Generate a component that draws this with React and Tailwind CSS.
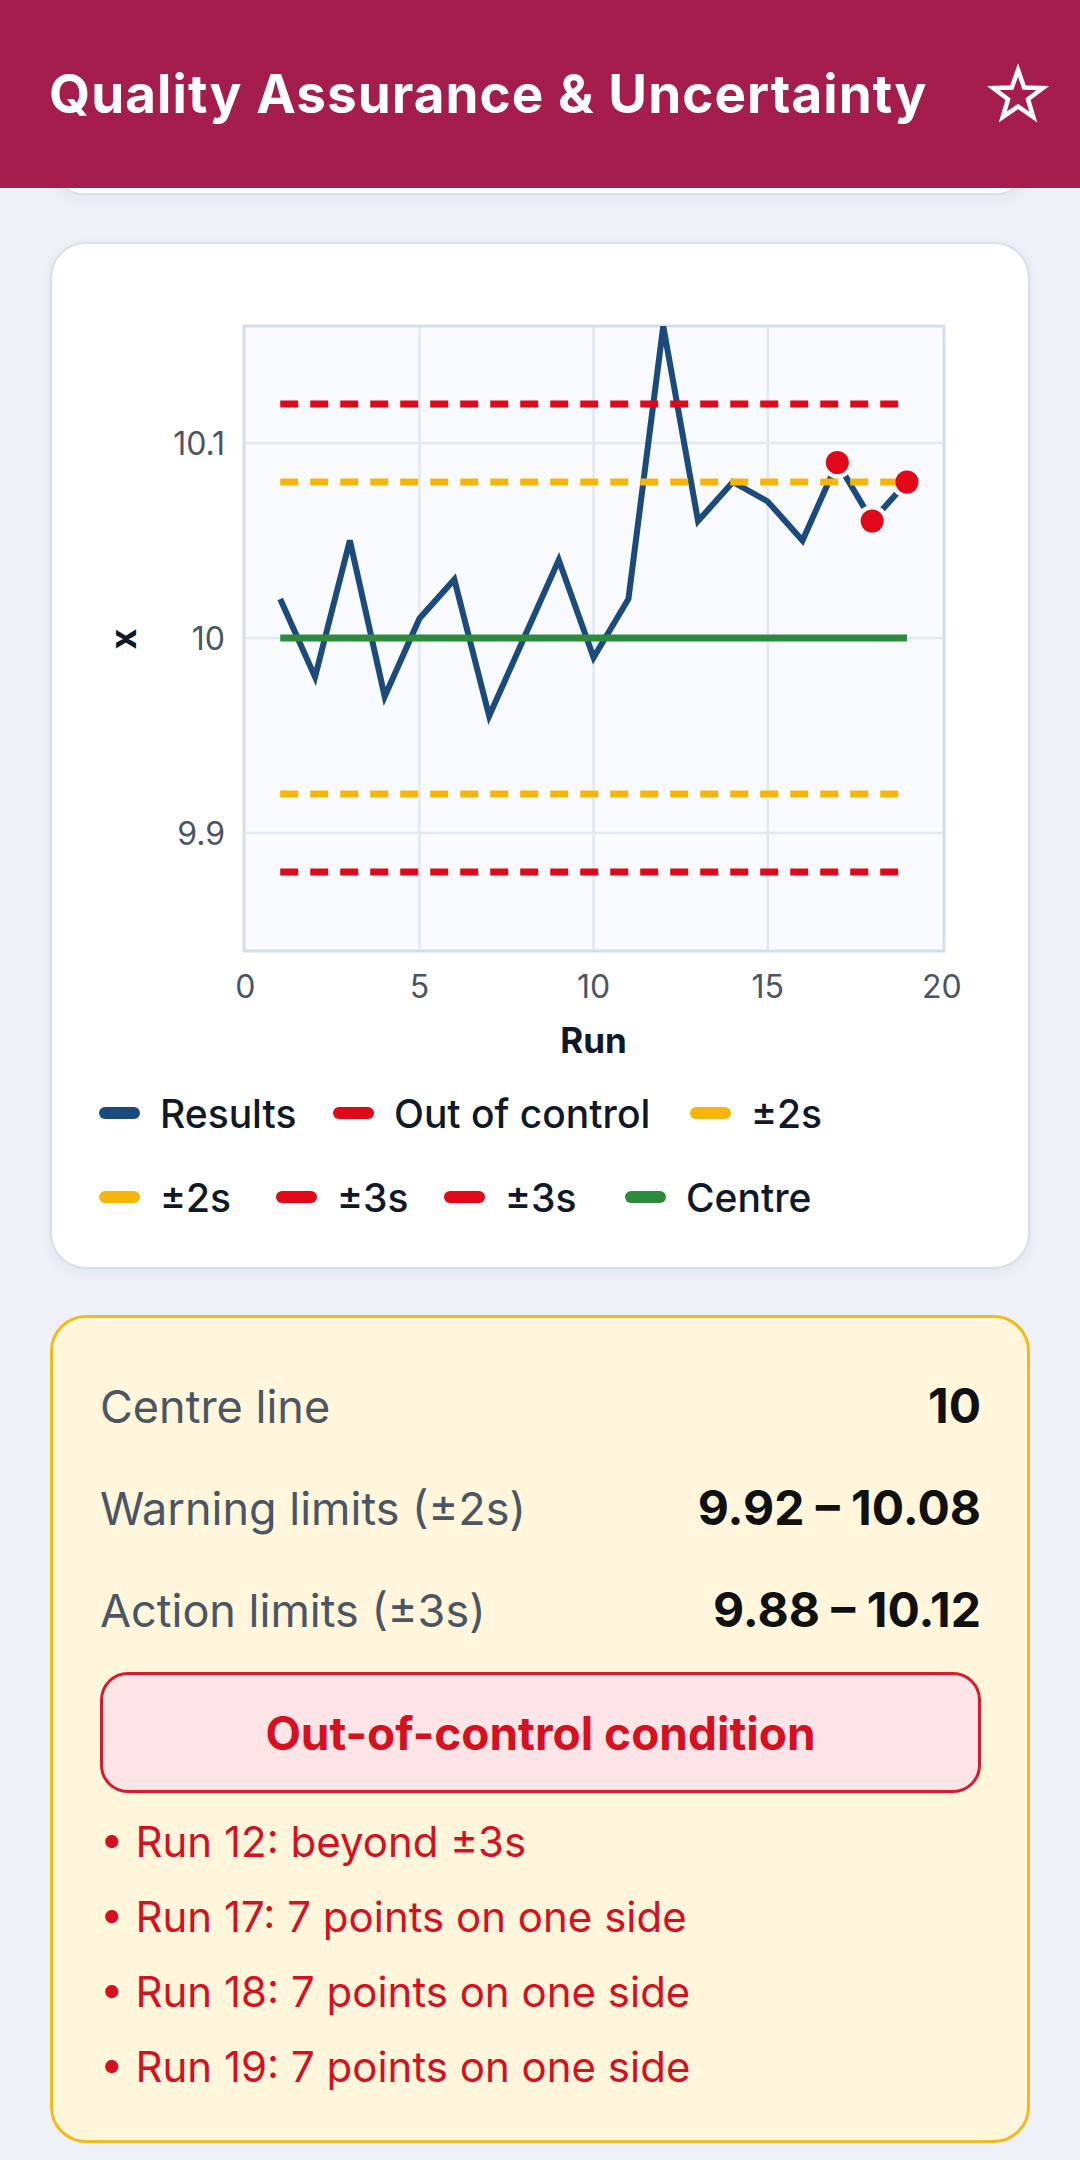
import React from "react";

const FONT = 'Inter, "Noto Sans", "Liberation Sans", sans-serif';

// Control chart data: one result per analytical run
const RESULTS = [
  10.02, 9.98, 10.05, 9.97, 10.01, 10.03, 9.96, 10.0, 10.04, 9.99, 10.02, 10.16,
  10.06, 10.08, 10.07, 10.05, 10.09, 10.06, 10.08,
];
const FLAGGED = [17, 18, 19];

const BLUE = "#1B4A7C";
const RED = "#E1081A";
const AMBER = "#F5B50A";
const GREEN = "#2E8B3E";

// Scales (drawing coordinates are page-aligned, shifted by the card origin)
const sx = (v) => 245.4 + 34.82 * v;
const sy = (v) => 638 - (v - 10) * 1950;

const PLOT = { x: 244, y: 326, w: 700, h: 625 };

function StarOutline() {
  const cx = 32;
  const cy = 34;
  const R = 26;
  const r = 10.5;
  const pts = Array.from({ length: 10 }, (_, i) => {
    const a = ((-90 + i * 36) * Math.PI) / 180;
    const rad = i % 2 ? r : R;
    return `${(cx + rad * Math.cos(a)).toFixed(2)},${(cy + rad * Math.sin(a)).toFixed(2)}`;
  }).join(" ");
  return (
    <svg width="64" height="64" viewBox="0 0 64 64" aria-hidden="true">
      <polygon
        points={pts}
        fill="none"
        stroke="#ffffff"
        strokeWidth="4.5"
        strokeLinejoin="miter"
        strokeMiterlimit="10"
      />
    </svg>
  );
}

function ControlChart() {
  const linePts = RESULTS.map((v, i) => `${sx(i + 1)},${sy(v)}`).join(" ");
  const x1 = sx(1);
  const x2 = sx(19);
  const dashed = [
    { v: 10.12, c: RED },
    { v: 10.08, c: AMBER },
    { v: 9.92, c: AMBER },
    { v: 9.88, c: RED },
  ];
  return (
    <svg width="976" height="827" viewBox="0 0 976 827" style={{ fontFamily: FONT }}>
      <defs>
        <clipPath id="plot-area">
          <rect x={PLOT.x} y={PLOT.y} width={PLOT.w} height={PLOT.h} />
        </clipPath>
      </defs>
      <g transform="translate(-52,-244)">
        <rect x={PLOT.x} y={PLOT.y} width={PLOT.w} height={PLOT.h} fill="#F8FAFD" />
        {[5, 10, 15].map((t) => (
          <line key={`gx${t}`} x1={sx(t)} x2={sx(t)} y1={PLOT.y} y2={PLOT.y + PLOT.h} stroke="#E2E8F0" strokeWidth="2.5" />
        ))}
        {[10.1, 10, 9.9].map((t) => (
          <line key={`gy${t}`} x1={PLOT.x} x2={PLOT.x + PLOT.w} y1={sy(t)} y2={sy(t)} stroke="#E2E8F0" strokeWidth="2.5" />
        ))}
        <rect x={PLOT.x} y={PLOT.y} width={PLOT.w} height={PLOT.h} fill="none" stroke="#D6DEE9" strokeWidth="3" />

        {/* tick labels */}
        {[
          [10.1, "10.1"],
          [10, "10"],
          [9.9, "9.9"],
        ].map(([v, l]) => (
          <text key={l} x="225" y={sy(v) + 11.5} textAnchor="end" fontSize="32" fill="#4B5563">
            {l}
          </text>
        ))}
        {[0, 5, 10, 15, 20].map((t) => (
          <text key={`tx${t}`} x={sx(t)} y="998" textAnchor="middle" fontSize="32" fill="#4B5563">
            {t}
          </text>
        ))}
        <text x="593.5" y="1053" textAnchor="middle" fontSize="35" fontWeight="700" fill="#111827">
          Run
        </text>
        <text transform="translate(136,639) rotate(-90)" textAnchor="middle" fontSize="36" fontWeight="700" fill="#111827">
          x
        </text>

        <g clipPath="url(#plot-area)">
          <polyline points={linePts} fill="none" stroke={BLUE} strokeWidth="6" strokeLinejoin="miter" />
          {FLAGGED.map((run) => (
            <circle key={`m${run}`} cx={sx(run)} cy={sy(RESULTS[run - 1])} r="16" fill="#F8FAFD" />
          ))}
          {dashed.map((d) => (
            <line key={d.v} x1={x1} x2={x2} y1={sy(d.v)} y2={sy(d.v)} stroke={d.c} strokeWidth="7" strokeDasharray="18 12" />
          ))}
          <line x1={x1} x2={x2} y1={sy(10)} y2={sy(10)} stroke={GREEN} strokeWidth="7" />
          {FLAGGED.map((run) => (
            <circle key={`d${run}`} cx={sx(run)} cy={sy(RESULTS[run - 1])} r="11.5" fill={RED} />
          ))}
        </g>
      </g>
    </svg>
  );
}

function LegendItem({ color, label, width }) {
  return (
    <div className="flex items-center gap-[20px] shrink-0" style={width ? { width } : undefined}>
      <span className="block w-[41px] h-[12px] rounded-full shrink-0" style={{ backgroundColor: color }} />
      <span className="text-[39px] font-medium text-[#111827] leading-none whitespace-nowrap">{label}</span>
    </div>
  );
}

function InfoRow({ label, value }) {
  return (
    <div className="flex h-[102px] items-center justify-between">
      <span className="text-[45px] leading-none text-[#4B5563]">{label}</span>
      <span className="text-[48px] leading-none font-bold text-[#111111]">{value}</span>
    </div>
  );
}

export default function App() {
  const alerts = [
    "Run 12: beyond ±3s",
    "Run 17: 7 points on one side",
    "Run 18: 7 points on one side",
    "Run 19: 7 points on one side",
  ];
  return (
    <div className="w-[1080px] h-[2160px] bg-[#EEF2F8] flex flex-col overflow-hidden" style={{ fontFamily: FONT }}>
      <header className="h-[188px] shrink-0 bg-[#A51D4D] flex items-center justify-between pl-[49px] pr-[30px]">
        <h1 className="text-[53px] font-bold text-white leading-none tracking-[0.02em]">
          Quality Assurance &amp; Uncertainty
        </h1>
        <StarOutline />
      </header>

      <main className="flex-1 overflow-hidden px-[50px] flex flex-col">
        {/* previous section, scrolled up under the header */}
        <div className="-mt-[60px] h-[67px] shrink-0 rounded-[36px] border-2 border-[#D8DFE9] bg-white shadow-[0_4px_14px_rgba(15,23,42,0.06)]" />

        <section className="mt-[47px] shrink-0 rounded-[36px] border-2 border-[#D8DFE9] bg-white shadow-[0_4px_14px_rgba(15,23,42,0.06)] pb-[28px]">
          <ControlChart />
          <div className="pl-[47px] flex flex-col">
            <div className="h-[84px] flex items-center">
              <LegendItem color={BLUE} label="Results" width={234} />
              <LegendItem color={RED} label="Out of control" width={357} />
              <LegendItem color={AMBER} label="±2s" />
            </div>
            <div className="h-[84px] flex items-center">
              <LegendItem color={AMBER} label="±2s" width={177} />
              <LegendItem color={RED} label="±3s" width={168} />
              <LegendItem color={RED} label="±3s" width={181} />
              <LegendItem color={GREEN} label="Centre" />
            </div>
          </div>
        </section>

        <section className="mt-[46px] shrink-0 rounded-[36px] border-[3px] border-[#F2BA1E] bg-[#FFF6DC] pt-[37px] pb-[36px] pl-[47px] pr-[46px]">
          <InfoRow label="Centre line" value="10" />
          <InfoRow label="Warning limits (±2s)" value="9.92 – 10.08" />
          <InfoRow label="Action limits (±3s)" value="9.88 – 10.12" />
          <div className="mt-[11px] h-[121px] rounded-[28px] border-[3px] border-[#D91A2A] bg-[#FDE4E6] flex items-center justify-center">
            <span className="text-[46px] font-bold leading-none text-[#D7101F]">Out-of-control condition</span>
          </div>
          <ul className="mt-[11px] flex flex-col">
            {alerts.map((a) => (
              <li key={a} className="h-[75px] flex items-center text-[42px] leading-none text-[#D7101F]">
                • {a}
              </li>
            ))}
          </ul>
        </section>
      </main>
    </div>
  );
}
